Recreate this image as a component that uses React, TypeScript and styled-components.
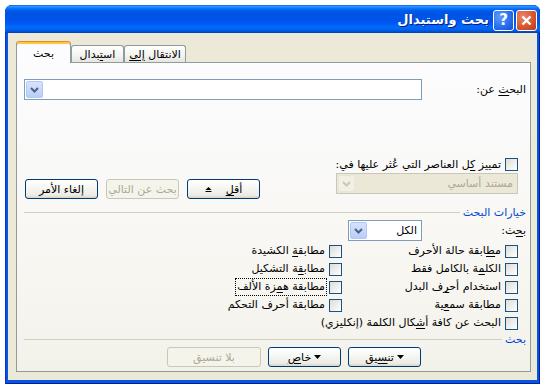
import React from 'react';
import styled, { createGlobalStyle, css } from 'styled-components';

const FONT = '"DejaVu Sans", "Noto Sans", sans-serif';

const GlobalStyle = createGlobalStyle`
  html, body {
    margin: 0;
    padding: 0;
    background: #ffffff;
  }
  body {
    font-family: ${FONT};
    font-size: 11px;
    color: #000000;
  }
  u {
    text-decoration-thickness: 1px;
    text-underline-offset: 2px;
  }
`;

const Window = styled.div`
  box-sizing: border-box;
  width: 535px;
  margin: 5px 0 0 5px;
  background: #0855dd;
  border-radius: 7px 7px 0 0;
  box-shadow: inset 1px 0 #0831d9, inset -1px 0 #001ea0, inset 0 -1px #001ea0;
  display: flex;
  flex-direction: column;
  overflow: hidden;
`;

const TitleBar = styled.div`
  height: 28px;
  display: flex;
  direction: rtl;
  align-items: center;
  gap: 2px;
  padding: 0 3px;
  background: linear-gradient(
    to bottom,
    #0058ee 0%,
    #3593ff 4%,
    #288eff 7%,
    #127dff 10%,
    #036ffc 14%,
    #0262ee 18%,
    #0057e5 24%,
    #0054e3 30%,
    #0055eb 58%,
    #005bf5 68%,
    #026afe 78%,
    #0062ef 88%,
    #0052d6 94%,
    #0040ab 100%
  );
`;

const CaptionButton = styled.div<{ $kind: 'close' | 'help' }>`
  box-sizing: border-box;
  width: 21px;
  height: 21px;
  margin-top: 2px;
  border: 1px solid #ffffff;
  border-radius: 3px;
  display: flex;
  align-items: center;
  justify-content: center;
  color: #ffffff;
  font: bold 15px ${FONT};
  ${(p) =>
    p.$kind === 'close'
      ? css`
          background: radial-gradient(circle at 30% 30%, #e9876b 0%, #d8572f 55%, #b83a1a 100%);
        `
      : css`
          background: radial-gradient(circle at 30% 30%, #5e9bfb 0%, #2a6fef 55%, #1550d0 100%);
          margin-left: 1px;
        `}
`;

const Caption = styled.div`
  color: #ffffff;
  font: bold 13px ${FONT};
  text-shadow: 1px 1px #0a1883;
  margin-right: 1px;
  padding-top: 1px;
`;

const Body = styled.div`
  margin: 0 3px 4px 3px;
  background: #ece9d8;
  padding: 8px 6px 8px 8px;
`;

const TabStrip = styled.div`
  height: 21px;
  display: flex;
  align-items: flex-end;
`;

const Tab = styled.div<{ $active?: boolean; $w: number }>`
  box-sizing: border-box;
  width: ${(p) => p.$w}px;
  height: 17px;
  display: flex;
  align-items: center;
  justify-content: center;
  border: 1px solid #919b9c;
  border-bottom: none;
  border-radius: 3px 3px 0 0;
  background: linear-gradient(#ffffff, #f3f3ef 60%, #e6e5de);
  padding-top: 1px;
  ${(p) =>
    p.$active &&
    css`
      height: 22px;
      margin-bottom: -1px;
      position: relative;
      z-index: 1;
      border-top: 1px solid #e68b2c;
      box-shadow: inset 0 2px #ffc73c;
      background: #fcfcfe;
      padding-top: 2px;
    `}
`;

const TabLabel = styled.span`
  direction: rtl;
  white-space: nowrap;
`;

const Panel = styled.div`
  box-sizing: border-box;
  height: 310px;
  border: 1px solid #919b9c;
  background: linear-gradient(#fcfcfe, #f7f6f1 70%, #f2f1ea);
  direction: rtl;
  padding: 16px 4px 0 7px;
  display: flex;
  flex-direction: column;
`;

const Row = styled.div<{ $top?: number }>`
  display: flex;
  align-items: center;
  margin-top: ${(p) => p.$top ?? 0}px;
`;

const FieldLabel = styled.div<{ $w: number }>`
  width: ${(p) => p.$w}px;
  flex: none;
`;

const Combo = styled.div<{ $w: number; $disabled?: boolean }>`
  box-sizing: border-box;
  width: ${(p) => p.$w}px;
  height: 21px;
  border: 1px solid #7f9db9;
  background: #ffffff;
  display: flex;
  align-items: center;
  justify-content: space-between;
  padding: 1px 4px 1px 1px;
  color: #000000;
  ${(p) =>
    p.$disabled &&
    css`
      border-color: #c9c7ba;
      background: #ebe8d7;
      color: #aca899;
    `}
`;

const DropButton = styled.div<{ $disabled?: boolean }>`
  box-sizing: border-box;
  width: 17px;
  height: 17px;
  border: 1px solid #b2c7f4;
  border-radius: 2px;
  background: linear-gradient(#d7e3fd, #b8cdf9);
  display: flex;
  align-items: center;
  justify-content: center;
  ${(p) =>
    p.$disabled &&
    css`
      border-color: #e8e5d6;
      background: #f2f0e5;
    `}
`;

const Chevron = ({ color }: { color: string }) => (
  <svg width="9" height="6" viewBox="0 0 9 6">
    <path d="M1 1 L4.5 4.5 L8 1" fill="none" stroke={color} strokeWidth="2" />
  </svg>
);

const ActionRow = styled.div`
  display: flex;
  align-items: flex-start;
  justify-content: space-between;
  margin-top: 55px;
`;

const HighlightColumn = styled.div`
  display: flex;
  flex-direction: column;
  margin-right: 8px;
`;

const ButtonGroup = styled.div<{ $top?: number; $right?: number; $gap: number }>`
  display: flex;
  gap: ${(p) => p.$gap}px;
  margin-top: ${(p) => p.$top ?? 0}px;
  margin-right: ${(p) => p.$right ?? 0}px;
  margin-left: 1px;
`;

const PushButton = styled.button<{ $w?: number }>`
  box-sizing: border-box;
  width: ${(p) => p.$w ?? 73}px;
  height: 20px;
  padding: 0;
  border: 1px solid #003c74;
  border-radius: 3px;
  background: linear-gradient(#ffffff 0%, #f6f6f2 45%, #ecebe5 85%, #d8d2c7 100%);
  font: 11px ${FONT};
  color: #000000;
  direction: rtl;
  display: flex;
  align-items: center;
  justify-content: center;
  gap: 3px;

  &:disabled {
    border-color: #c9c7ba;
    background: #f5f4ea;
    color: #aca899;
  }
`;

const Check = styled.span`
  box-sizing: border-box;
  width: 13px;
  height: 13px;
  flex: none;
  border: 1px solid #1c5180;
  background: linear-gradient(135deg, #dcdcd7, #ffffff);
`;

const CheckRow = styled.label<{ $span?: boolean }>`
  display: flex;
  align-items: center;
  gap: 4px;
  height: 18px;
  ${(p) =>
    p.$span &&
    css`
      grid-column: 1 / 3;
    `}
`;

const CheckText = styled.span<{ $focused?: boolean }>`
  padding: 1px 1px 2px;
  border: 1px dotted ${(p) => (p.$focused ? '#000000' : 'transparent')};
  margin-right: -2px;
`;

const GroupHeader = styled.div<{ $top: number }>`
  display: flex;
  align-items: center;
  gap: 3px;
  height: 12px;
  margin-top: ${(p) => p.$top}px;
  color: #0046d5;

  &::after {
    content: '';
    flex: 1;
    height: 1px;
    background: #d0d0bf;
  }
`;

const OptionsGrid = styled.div`
  display: grid;
  grid-template-columns: 176px 1fr;
  margin: 1px 8px 0 0;
`;

const Arrow = ({ up }: { up?: boolean }) =>
  up ? (
    <svg width="7" height="7" viewBox="0 0 7 7">
      <path d="M0.5 4 L3.5 1 L6.5 4 Z" fill="#000" />
      <rect x="0.5" y="5" width="6" height="1" fill="#000" />
    </svg>
  ) : (
    <svg width="7" height="4" viewBox="0 0 7 4">
      <path d="M0 0 L7 0 L3.5 4 Z" fill="#000" />
    </svg>
  );

const options: { text: React.ReactNode; focused?: boolean; span?: boolean }[] = [
  { text: <>م<u>ط</u>ابقة حالة الأحرف</> },
  { text: <>مطابق<u>ة</u> الكشيدة</> },
  { text: <>الكل<u>م</u>ة بالكامل فقط</> },
  { text: <>مطاب<u>ق</u>ة التشكيل</> },
  { text: <>استخدام أح<u>ر</u>ف البدل</> },
  { text: <>مطابقة ه<u>م</u>زة الألف</>, focused: true },
  { text: <>مطابقة سم<u>ع</u>ية</> },
  { text: <>مطابقة أحرف التحكم</> },
  { text: <>البحث عن كافة أ<u>ش</u>كال الكلمة (إنكليزي)</>, span: true },
];

export default function App() {
  return (
    <>
      <GlobalStyle />
      <Window>
        <TitleBar>
          <CaptionButton $kind="close">
            <svg width="11" height="11" viewBox="0 0 11 11">
              <path d="M1.5 1.5 L9.5 9.5 M9.5 1.5 L1.5 9.5" stroke="#fff" strokeWidth="2.4" />
            </svg>
          </CaptionButton>
          <CaptionButton $kind="help">?</CaptionButton>
          <Caption>بحث واستبدال</Caption>
        </TitleBar>
        <Body>
          <TabStrip>
            <Tab $active $w={55}>
              <TabLabel>بحث</TabLabel>
            </Tab>
            <Tab $w={53}>
              <TabLabel>اس<u>ت</u>بدال</TabLabel>
            </Tab>
            <Tab $w={62}>
              <TabLabel>الانتقال <u>إلى</u></TabLabel>
            </Tab>
          </TabStrip>
          <Panel>
            <Row>
              <FieldLabel $w={104}>البح<u>ث</u> عن:</FieldLabel>
              <Combo $w={398}>
                <span />
                <DropButton>
                  <Chevron color="#4d6185" />
                </DropButton>
              </Combo>
            </Row>

            <ActionRow>
              <HighlightColumn>
                <CheckRow>
                  <Check />
                  <span>تمييز <u>ك</u>ل العناصر التي عُثر عليها في:</span>
                </CheckRow>
                <Combo $w={182} $disabled>
                  <span>مستند أساسي</span>
                  <DropButton $disabled>
                    <Chevron color="#c9c7ba" />
                  </DropButton>
                </Combo>
              </HighlightColumn>
              <ButtonGroup $top={24} $gap={8}>
                <PushButton>
                  <span>أق<u>ل</u></span>
                  <span style={{ width: 8 }} />
                  <Arrow up />
                </PushButton>
                <PushButton disabled>بحث عن التالي</PushButton>
                <PushButton>إلغاء الأمر</PushButton>
              </ButtonGroup>
            </ActionRow>

            <GroupHeader $top={7}>خيارات البحث</GroupHeader>

            <Row $top={2}>
              <FieldLabel $w={104}>ب<u>ح</u>ث:</FieldLabel>
              <Combo $w={74}>
                <span>الكل</span>
                <DropButton>
                  <Chevron color="#4d6185" />
                </DropButton>
              </Combo>
            </Row>

            <OptionsGrid>
              {options.map((o, i) => (
                <CheckRow key={i} $span={o.span}>
                  <Check />
                  <CheckText $focused={o.focused}>{o.text}</CheckText>
                </CheckRow>
              ))}
            </OptionsGrid>

            <GroupHeader $top={1}>بحث</GroupHeader>

            <ButtonGroup $top={2} $right={105} $gap={7}>
              <PushButton>
                <Arrow />
                <span>تن<u>س</u>يق</span>
              </PushButton>
              <PushButton>
                <Arrow />
                <span>خا<u>ص</u></span>
              </PushButton>
              <PushButton $w={94} disabled>
                بلا تنسيق
              </PushButton>
            </ButtonGroup>
          </Panel>
        </Body>
      </Window>
    </>
  );
}
